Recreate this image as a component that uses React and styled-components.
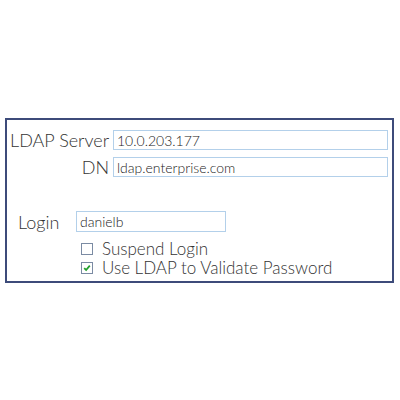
import React, { useState } from 'react';
import styled, { createGlobalStyle } from 'styled-components';

const GlobalStyle = createGlobalStyle`
  html, body {
    margin: 0;
    padding: 0;
    background: #fff;
  }
  body {
    font-family: Lato, "Open Sans", sans-serif;
    font-weight: 300;
    color: #333;
  }
`;

const Page = styled.div`
  width: 400px;
  height: 400px;
  padding-top: 118px;
  padding-left: 5px;
  box-sizing: border-box;
`;

const Frame = styled.div`
  width: 389px;
  height: 165px;
  box-sizing: border-box;
  border: 2px solid #3d4b7a;
  padding: 10px 4px 4px 3px;
`;

const ServerGrid = styled.div`
  display: grid;
  grid-template-columns: 99px 1fr;
  column-gap: 4px;
  row-gap: 7px;
  align-items: center;
`;

const Label = styled.label`
  font-size: 18px;
  line-height: 20px;
  text-align: ${(p) => (p.$right ? 'right' : 'left')};
  width: ${(p) => p.$width || 'auto'};
  flex-shrink: 0;
  white-space: nowrap;
`;

const Field = styled.input`
  box-sizing: border-box;
  height: ${(p) => p.$height || '20px'};
  width: ${(p) => p.$width || '100%'};
  border: 1.5px solid #b3d0ea;
  padding: 0 3px;
  font-family: Lato, "Open Sans", sans-serif;
  font-weight: 300;
  font-size: 14px;
  color: #222;
  outline: none;
  background: #fff;
`;

const LoginRow = styled.div`
  display: flex;
  align-items: center;
  margin-top: 34px;
  margin-left: 8px;
`;

const Options = styled.div`
  display: flex;
  flex-direction: column;
  margin-left: 71px;
  margin-top: 7px;
`;

const Option = styled.label`
  display: flex;
  align-items: center;
  gap: 9px;
  font-size: 17px;
  line-height: 19px;
  cursor: pointer;
`;

const Box = styled.span`
  width: 12px;
  height: 12px;
  box-sizing: border-box;
  border: 1px solid #7b8ba3;
  background: #fff;
  display: flex;
  align-items: center;
  justify-content: center;
`;

function Check({ checked, label, onToggle }) {
  return (
    <Option onClick={onToggle}>
      <Box>
        {checked && (
          <svg width="8" height="8" viewBox="0 0 8 8">
            <path d="M1.2 4.2 L3.1 6 L6.8 1.6" fill="none" stroke="#22a02c" strokeWidth="1.8" />
          </svg>
        )}
      </Box>
      {label}
    </Option>
  );
}

export default function App() {
  const [suspend, setSuspend] = useState(false);
  const [useLdap, setUseLdap] = useState(true);

  return (
    <Page>
      <GlobalStyle />
      <Frame>
        <ServerGrid>
          <Label $right>LDAP Server</Label>
          <Field defaultValue="10.0.203.177" />
          <Label $right>DN</Label>
          <Field defaultValue="ldap.enterprise.com" />
        </ServerGrid>
        <LoginRow>
          <Label $width="58px">Login</Label>
          <Field defaultValue="danielb" $width="150px" $height="21px" />
        </LoginRow>
        <Options>
          <Check checked={suspend} label="Suspend Login" onToggle={() => setSuspend(!suspend)} />
          <Check checked={useLdap} label="Use LDAP to Validate Password" onToggle={() => setUseLdap(!useLdap)} />
        </Options>
      </Frame>
    </Page>
  );
}
